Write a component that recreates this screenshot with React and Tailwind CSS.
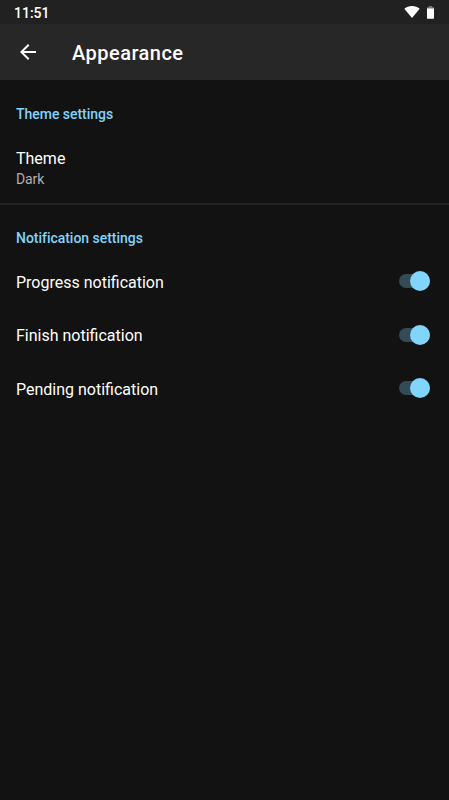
const toggles = ['Progress notification', 'Finish notification', 'Pending notification']

function StatusBar() {
    return (
        <div className="flex h-6 items-center bg-[#212121] px-3.5 text-white">
            <span className="flex-1 pt-0.5 text-sm leading-6 font-medium">11:51</span>
            <svg width="16" height="12" viewBox="0 0 16 12" fill="#ffffff" className="mr-1.5">
                <path d="M8 12 .3 2.7C2.4.9 5.1 0 8 0s5.600.9 7.700 2.700z" />
            </svg>
            <svg width="9" height="13" viewBox="0 0 9 13">
                <path d="M2.800 0h3.400v1.200H8V3H1V1.200h1.800z" fill="#777777" />
                <path d="M1 2.500h7v9.700a.6.6 0 0 1-.6.6H1.600a.6.6 0 0 1-.6-.6z" fill="#ffffff" />
            </svg>
        </div>
    )
}

function Toolbar() {
    return (
        <header className="flex h-14 items-center bg-[#272727] pl-5 text-white">
            <svg width="16" height="16" viewBox="0 0 16 16" fill="#ffffff">
                <path d="M16 7H3.830l5.590-5.590L8 0 0 8l8 8 1.410-1.410L3.830 9H16z" />
            </svg>
            <h1 className="ml-9 pt-0.5 text-xl font-medium tracking-[0.47px]">Appearance</h1>
        </header>
    )
}

function SectionTitle({ children }) {
    return <h2 className="text-sm leading-5 font-medium tracking-[-0.03px] text-[#81d4fa]">{children}</h2>
}

function Switch() {
    return (
        <button role="switch" aria-checked="true" className="flex h-5 w-[31px] items-center">
            <span className="flex h-3.5 w-[31px] items-center justify-end rounded-full bg-[#344b56]">
                <span className="h-5 w-5 shrink-0 rounded-full bg-[#81d4fa]" />
            </span>
        </button>
    )
}

export default function App() {
    return (
        <div className="flex h-[800px] w-[449px] flex-col overflow-hidden bg-[#121212] font-['Roboto',sans-serif]">
            <StatusBar />
            <Toolbar />

            {/* Theme */}
            <section className="h-[125px] border-b-2 border-[#222222] px-4 pt-6">
                <SectionTitle>Theme settings</SectionTitle>
                <div className="pt-[25px]">
                    <div className="text-base leading-5 text-white">Theme</div>
                    <div className="text-sm leading-5 tracking-[-0.1px] text-[#b0b0b0]">Dark</div>
                </div>
            </section>

            {/* Notifications */}
            <section className="pl-4 pr-[19.5px] pt-[23px]">
                <SectionTitle>Notification settings</SectionTitle>
                <div className="pt-[6.3px]">
                    {toggles.map((label) => (
                        <div key={label} className="flex h-[53.5px] items-center justify-between">
                            <span className="pt-[3px] text-base text-white">{label}</span>
                            <Switch />
                        </div>
                    ))}
                </div>
            </section>
        </div>
    )
}
